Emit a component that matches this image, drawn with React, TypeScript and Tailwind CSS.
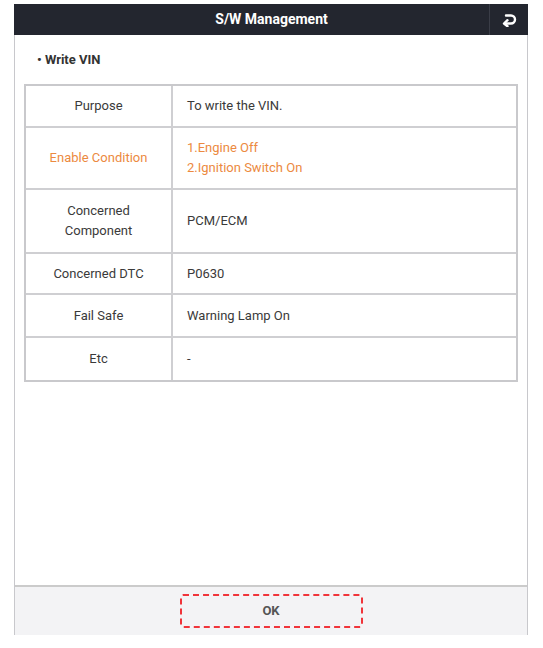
import React from "react";

const ROWS: { label: string; value: React.ReactNode; orange?: boolean; h: string }[] = [
  { label: "Purpose", value: "To write the VIN.", h: "h-[42px]" },
  {
    label: "Enable Condition",
    value: (
      <>
        <div>1.Engine Off</div>
        <div>2.Ignition Switch On</div>
      </>
    ),
    orange: true,
    h: "h-[62px]",
  },
  {
    label: "Concerned Component",
    value: "PCM/ECM",
    h: "h-[64px]",
  },
  { label: "Concerned DTC", value: "P0630", h: "h-[41px]" },
  { label: "Fail Safe", value: "Warning Lamp On", h: "h-[43px]" },
  { label: "Etc", value: "-", h: "h-[42px]" },
];

function ReturnIcon() {
  return (
    <svg width="16" height="14" viewBox="0 0 16 14" fill="none">
      <path d="M5 2.5 H10 a4 4 0 0 1 0 8 H4" stroke="white" strokeWidth="2.4" strokeLinecap="round" />
      <path d="M6.5 7.2 L3 10.5 L6.5 13.3" stroke="white" strokeWidth="2.4" strokeLinecap="round" strokeLinejoin="round" />
    </svg>
  );
}

export default function App() {
  return (
    <div className="w-[543px] h-[648px] bg-white pt-[4px] pl-[14px] font-['Roboto',sans-serif]">
      <div className="w-[514px] h-[631px] flex flex-col border-x border-[#c8c8cc]">
        {/* Header */}
        <div className="h-[31px] bg-[#23262f] flex items-center relative -mx-px">
          <div className="flex-1 text-center text-white font-bold text-[14px] pl-[40px]">S/W Management</div>
          <div className="w-[39px] h-full border-l border-[#3a3d47] flex items-center justify-center">
            <ReturnIcon />
          </div>
        </div>

        {/* Content */}
        <div className="flex-1 px-[9px] pt-[16px]">
          <div className="pl-[13px] text-[13px] font-bold text-[#333] leading-[18px]">• Write VIN</div>
          <div className="mt-[15px] w-[494px] border-2 border-[#c9c9cc]">
            {ROWS.map((r, i) => (
              <div
                key={i}
                className={`flex ${r.h} ${i < ROWS.length - 1 ? "border-b-2 border-[#cfcfd2]" : ""}`}
              >
                <div
                  className={`w-[147px] shrink-0 border-r-2 border-[#cfcfd2] flex items-center justify-center text-center text-[13px] leading-[20px] px-2 ${
                    r.orange ? "text-[#ec8a3f]" : "text-[#3a3a3a]"
                  }`}
                >
                  {r.label === "Concerned Component" ? (
                    <div>
                      <div>Concerned</div>
                      <div>Component</div>
                    </div>
                  ) : (
                    r.label
                  )}
                </div>
                <div
                  className={`flex-1 flex flex-col justify-center pl-[14px] text-[13px] leading-[20px] ${
                    r.orange ? "text-[#ec8a3f]" : "text-[#3a3a3a]"
                  }`}
                >
                  {r.value}
                </div>
              </div>
            ))}
          </div>
        </div>

        {/* Footer */}
        <div className="h-[50px] bg-[#f3f3f5] border-t-2 border-[#cbcbcb] flex items-center justify-center">
          <div className="w-[183px] h-[34px] border-2 border-dashed border-[#f0343a] rounded-[3px] flex items-center justify-center text-[13px] font-bold text-[#555]">
            OK
          </div>
        </div>
      </div>
    </div>
  );
}
